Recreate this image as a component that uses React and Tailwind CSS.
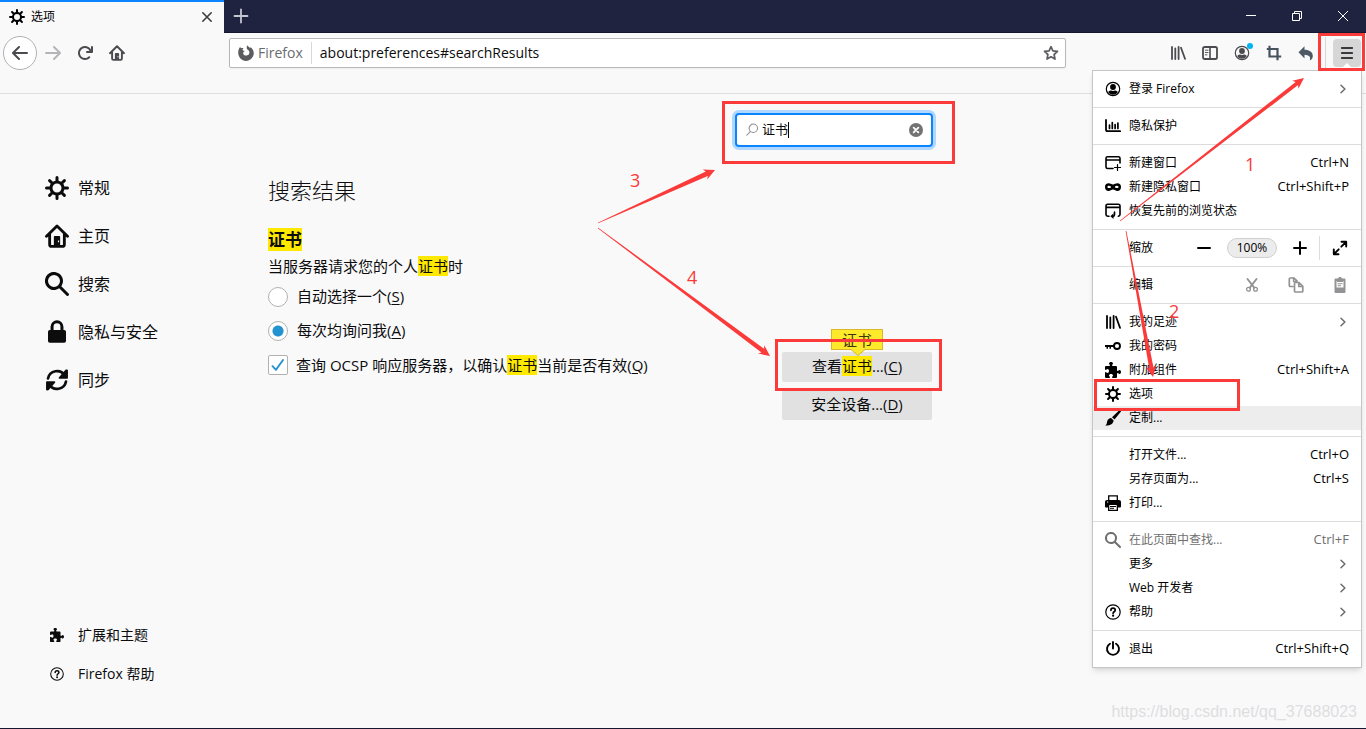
import React from "react";

const GEAR =
  "M15 7h-2.1a4.967 4.967 0 0 0-.732-1.753l1.49-1.49a1 1 0 0 0-1.414-1.414l-1.49 1.49A4.968 4.968 0 0 0 9 3.1V1a1 1 0 0 0-2 0v2.1a4.968 4.968 0 0 0-1.753.732l-1.49-1.49a1 1 0 0 0-1.414 1.415l1.49 1.49A4.967 4.967 0 0 0 3.1 7H1a1 1 0 0 0 0 2h2.1a4.968 4.968 0 0 0 .737 1.763c-.014.013-.032.017-.045.03l-1.45 1.45a1 1 0 1 0 1.414 1.414l1.45-1.45c.013-.013.018-.031.03-.045A4.968 4.968 0 0 0 7 12.9V15a1 1 0 0 0 2 0v-2.1a4.968 4.968 0 0 0 1.753-.732l1.49 1.49a1 1 0 0 0 1.414-1.414l-1.49-1.49A4.967 4.967 0 0 0 12.9 9H15a1 1 0 0 0 0-2zM5 8a3 3 0 1 1 3 3 3 3 0 0 1-3-3z";
const ARROW =
  "M15 7H3.414l4.293-4.293a1 1 0 0 0-1.414-1.414l-6 6a1 1 0 0 0 0 1.414l6 6a1 1 0 0 0 1.414-1.414L3.414 9H15a1 1 0 0 0 0-2z";
const RELOAD =
  "M15 1a1 1 0 0 0-1 1v2.418A6.995 6.995 0 1 0 8 15a6.954 6.954 0 0 0 4.95-2.05 1 1 0 0 0-1.414-1.414A5.019 5.019 0 1 1 12.549 6H10a1 1 0 0 0 0 2h5a1 1 0 0 0 1-1V2a1 1 0 0 0-1-1z";
const SEARCH =
  "M15.707 14.293l-4.822-4.822a6.019 6.019 0 1 0-1.414 1.414l4.822 4.822a1 1 0 0 0 1.414-1.414zM6 10a4 4 0 1 1 4-4 4 4 0 0 1-4 4z";
const PUZZLE =
  "M14.5 8c-.971 0-1 1-1.75 1a.765.765 0 0 1-.75-.75V5a1 1 0 0 0-1-1H7.75A.765.765 0 0 1 7 3.25c0-.75 1-.779 1-1.75C8 .635 7.1 0 6 0S4 .635 4 1.5c0 .971 1 1 1 1.75a.765.765 0 0 1-.75.75H1a1 1 0 0 0-1 1v2.25A.765.765 0 0 0 .75 8c.75 0 .779-1 1.75-1C3.365 7 4 7.9 4 9s-.635 2-1.5 2c-.971 0-1-1-1.75-1a.765.765 0 0 0-.75.75V15a1 1 0 0 0 1 1h3.25a.765.765 0 0 0 .75-.75c0-.75-1-.779-1-1.75 0-.865.9-1.5 2-1.5s2 .635 2 1.5c0 .971-1 1-1 1.75a.765.765 0 0 0 .75.75H11a1 1 0 0 0 1-1v-3.25a.765.765 0 0 1 .75-.75c.75 0 .779 1 1.75 1 .865 0 1.5-.9 1.5-2s-.635-2-1.5-2z";

function Svg({ className = "size-4", children }) {
  return (
    <svg viewBox="0 0 16 16" fill="currentColor" aria-hidden="true" className={`shrink-0 ${className}`}>
      {children}
    </svg>
  );
}

const line = { fill: "none", stroke: "currentColor", strokeLinecap: "round", strokeLinejoin: "round" };

const Gear = (p) => <Svg {...p}><path d={GEAR} /></Svg>;
const Back = (p) => <Svg {...p}><path d={ARROW} /></Svg>;
const Forward = (p) => <Svg {...p}><path d={ARROW} transform="matrix(-1 0 0 1 16 0)" /></Svg>;
const Reload = (p) => <Svg {...p}><path d={RELOAD} /></Svg>;
const Search = (p) => <Svg {...p}><path d={SEARCH} /></Svg>;
const Puzzle = (p) => <Svg {...p}><path d={PUZZLE} /></Svg>;
const Home = (p) => (
  <Svg {...p}>
    <path d="M1 8.2 8 1.3l7 6.9M3.1 7v6.6c0 .8.5 1.3 1.3 1.3h7.2c.8 0 1.3-.5 1.3-1.3V7" {...line} strokeWidth="1.9" />
    <path fillRule="evenodd" d="M6.6 8h2.8c.4 0 .7.3.7.7V15H5.9V8.700c0-.4.3-.7.7-.7zM8.600 11v1.200h.8V11z" />
  </Svg>
);
const Lock = (p) => (
  <Svg {...p}>
    <path d="M4.700 8V4.500a3.300 3.300 0 0 1 6.600 0V8" {...line} strokeWidth="2" />
    <rect x="2" y="6.600" width="12" height="8.600" rx="1.200" />
  </Svg>
);
const Sync = (p) => (
  <Svg {...p}>
    <path d="M2 7A6.100 6.100 0 0 1 13.200 5M14 9A6.100 6.100 0 0 1 2.800 11" {...line} strokeWidth="1.800" />
    <path d="M14.600 1c.4 0 .7.300.7.700v4.800c0 .4-.3.700-.7.700H9.800c-.6 0-.9-.7-.5-1.100l4.200-4.800c.2-.2.500-.3 1.100-.3zM1.400 15a.7.700 0 0 1-.7-.7V9.500c0-.4.300-.7.700-.7h4.800c.6 0 .9.700.5 1.100l-4.200 4.800c-.2.200-.5.300-1.100.3z" />
  </Svg>
);
const Help = (p) => (
  <Svg {...p}>
    <circle cx="8" cy="8" r="7.200" {...line} strokeWidth="1.200" />
    <path d="M5.900 6.300c0-1.300.9-2.100 2.100-2.100s2.200.8 2.200 2c0 1.500-2.100 1.600-2.100 3.100" {...line} strokeWidth="1.700" />
    <circle cx="8.100" cy="11.700" r="1.100" />
  </Svg>
);
const Person = (p) => (
  <Svg {...p}>
    <circle cx="8" cy="8" r="6.700" {...line} strokeWidth="1.200" />
    <circle cx="8" cy="6" r="2.900" />
    <path d="M3.200 11c.8-1.400 2.300-1.500 3-1.500.6.500 3 .5 3.600 0 .7 0 2.200.1 3 1.500-1 1.800-2.800 2.700-4.800 2.700S4.200 12.800 3.200 11z" />
  </Svg>
);
const Chart = (p) => (
  <Svg {...p}>
    <path d="M1 2v9.500c0 1 .6 1.700 1.700 1.700H15.200" {...line} strokeWidth="1.800" />
    <path d="M4.500 7v3.500M7.300 4.500v6M10.100 6.500v4M12.900 5v5.500" {...line} strokeWidth="1.700" />
  </Svg>
);
const NewWindow = (p) => (
  <Svg {...p}>
    <path d="M8 13.500H2.700c-1 0-1.700-.6-1.700-1.600V3.300c0-1 .7-1.600 1.700-1.600h10.600c1 0 1.700.6 1.700 1.600V8M1 5h14" {...line} strokeWidth="1.600" />
    <path d="M12.500 9.500v6M9.500 12.500h6" {...line} strokeWidth="1.200" />
  </Svg>
);
const RestoreWindow = (p) => (
  <Svg {...p}>
    <path d="M4 13.200H2.700c-1 0-1.700-.6-1.700-1.600V2.800c0-1 .7-1.600 1.700-1.600h10.600c1 0 1.700.6 1.700 1.600v8.800c0 1-.7 1.600-1.700 1.600M1 4.400h14M9.500 9v2.800c0 .8-.5 1.400-1.300 1.400H7.500" {...line} strokeWidth="1.600" />
    <path d="M8.500 10.300v5.700L5.400 13.200z" />
  </Svg>
);
const Mask = (p) => (
  <Svg {...p}>
    <path fillRule="evenodd" d="M3.600 4.300C1.400 4.300 0 5.500 0 8s1.500 4.100 3.500 4.100c1.900 0 2.900-1.500 4.500-1.500s2.600 1.500 4.500 1.500c2 0 3.500-1.600 3.500-4.100s-1.400-3.700-3.600-3.700c-1.800 0-2.900 1.200-4.400 1.200S5.400 4.300 3.600 4.300zM4.200 6.700c1 0 1.900.8 1.900 1.300S5.200 9 4.200 9s-1.900-.4-1.900-1 .9-1.300 1.900-1.300zm7.600 0c1 0 1.900.8 1.900 1.300s-.9 1-1.900 1-1.900-.4-1.900-1 .9-1.300 1.900-1.300z" />
  </Svg>
);
const Library = (p) => (
  <Svg {...p}>
    <path d="M2 2v12M5.300 3.500V14M8.600 2v12M11 2.800l4 11" {...line} strokeWidth="1.800" />
  </Svg>
);
const Key = (p) => (
  <Svg {...p}>
    <circle cx="12" cy="8" r="3" {...line} strokeWidth="1.900" />
    <path d="M0 7h9v2H6v1.800H4.500V9H3v1.800H1.500V9H0z" />
  </Svg>
);
const Brush = (p) => (
  <Svg {...p}>
    <path d="M15.700.3c.4.400.4 1 .1 1.400l-6.300 7.800-2.500-2.300L14.300.3c.4-.4 1-.4 1.400 0zM6.100 8.100l2.500 2.300c-.2 3-3.300 5.300-8.300 5.100 1.900-1.100 1.400-2.600 2-4.400.6-1.700 2-2.700 3.800-3z" />
  </Svg>
);
const Printer = (p) => (
  <Svg {...p}>
    <path d="M3.700 5V.9h8.600V5" fill="none" stroke="currentColor" strokeWidth="1.300" />
    <path fillRule="evenodd" d="M2 5h12c1.200 0 2 .8 2 2v4.500c0 .5-.4.900-.9.900H13V16H3v-3.600H.900a.9.900 0 0 1-.9-.9V7c0-1.200.8-2 2-2zm2.300 5v4.700h7.400V10zM2 6.500v1h1.200v-1z" />
    <path d="M5 11.500h6M5 13.300h4" fill="none" stroke="currentColor" strokeWidth="1" />
  </Svg>
);
const Power = (p) => (
  <Svg {...p}>
    <path d="M5 2.700a6 6 0 1 0 6 0M8 1v6.500" {...line} strokeWidth="1.900" />
  </Svg>
);
const Chevron = (p) => (
  <Svg {...p}>
    <path d="M6 4.200 9.900 8 6 11.800" {...line} strokeWidth="1.500" />
  </Svg>
);
const Minus = (p) => <Svg {...p}><path d="M2 8h12" {...line} strokeWidth="2" /></Svg>;
const Plus = (p) => <Svg {...p}><path d="M2 8h12M8 2v12" {...line} strokeWidth="2" /></Svg>;
const Expand = (p) => (
  <Svg {...p}>
    <path d="M9.300 6.700 14 2M6.700 9.300 2 14M9.500 1.800h4.700v4.700M6.500 14.200H1.800V9.500" {...line} strokeWidth="1.900" />
  </Svg>
);
const Cut = (p) => (
  <Svg {...p}>
    <path d="M3.500 2l6.700 8.700M12.500 2 5.800 10.700" {...line} strokeWidth="1.900" />
    <circle cx="4.500" cy="12.300" r="1.900" {...line} strokeWidth="1.300" />
    <circle cx="11.500" cy="12.300" r="1.900" {...line} strokeWidth="1.300" />
  </Svg>
);
const Copy = (p) => (
  <Svg {...p}>
    <path d="M5 9.500H2.300c-.6 0-1-.4-1-1V2c0-.6.400-1 1-1h3.400L9 4" {...line} strokeWidth="1.700" />
    <path d="M5.500 1v3.500H9" {...line} strokeWidth="1.400" />
    <path d="M6.500 6.500c0-.6.400-1 1-1H11l3.800 3.800V14c0 .6-.4 1-1 1H7.500c-.6 0-1-.4-1-1zM10.800 5.800v3.700h3.700" {...line} strokeWidth="1.700" />
  </Svg>
);
const Paste = (p) => (
  <Svg {...p}>
    <path fillRule="evenodd" d="M6 1.500C6.200.6 7 0 8 0s1.800.6 2 1.500h2.200c.8 0 1.300.5 1.300 1.300v11.900c0 .8-.5 1.300-1.300 1.300H3.800c-.8 0-1.300-.5-1.300-1.300V2.800c0-.8.5-1.300 1.300-1.300zM4.500 4v6.500h7V4z" />
    <path d="M5 2.500h6V5H5zM5.500 6.200h5v1h-5zM5.500 8.300h3.500v1H5.500z" />
  </Svg>
);
const Sidebar = (p) => (
  <Svg {...p}>
    <rect x="1" y="2" width="14" height="12" rx="1.700" {...line} strokeWidth="1.800" />
    <path d="M8 2v12" {...line} strokeWidth="1.600" />
    <path d="M3.300 5.200H6M3.300 7.500H6M3.300 9.800H5" {...line} strokeWidth=".9" />
  </Svg>
);
const Crop = (p) => (
  <Svg {...p}>
    <path d="M3.500.8v10.700h11.700M.8 4h10.700v11.200" fill="none" stroke="currentColor" strokeWidth="2.200" />
  </Svg>
);
const Undo = (p) => (
  <Svg {...p}>
    <path d="M6.500 1.200v3.600c5 0 8.300 2.300 8.300 6.200 0 2-1.100 3.700-3 4.500 1.300-3.600-.9-5.600-5.300-5.700v3.600L.5 7.200z" />
  </Svg>
);
const Star = (p) => (
  <Svg {...p}>
    <path d="M8 1.700l1.900 4.200 4.600.5-3.400 3.100.9 4.600L8 11.800l-4 2.300.9-4.600L1.500 6.400l4.600-.5z" {...line} strokeWidth="1.700" />
  </Svg>
);
const Flame = (p) => (
  <Svg {...p}>
    <path d="M.2 7.500C.2 5 1.200 3 2.300 1.800c0 .7.300 1.200.7 1.500.8-.3 1.700-.3 2.500 0-.8.700-1 1.400-.9 1.900.7.500 1.700.3 2 .8-.1.800-1.300.9-1.500 1.900.2 1.700 1.500 2.700 3.100 2.700 1.900 0 3.200-1.500 3.200-3.100 0-1.800-1.200-2.600-2-3C8.500 3.600 8.300 1.400 9.700.2c.2 1.500 1.600 1.900 2.600 2.800.2-.3.200-.7.100-1.100 2 1.500 3.400 3.700 3.400 6.200 0 4.300-3.500 7.800-7.800 7.800S.2 12 .2 7.500z" />
  </Svg>
);

function Mark({ children }) {
  return <mark className="bg-[#ffe900] text-inherit">{children}</mark>;
}

function ToolButton({ label, className = "text-[#4a4a4f]", children }) {
  return (
    <button type="button" aria-label={label} className={`flex h-8 w-8 items-center justify-center ${className}`}>
      {children}
    </button>
  );
}

function TitleBar() {
  return (
    <header className="flex h-[33px] border-b border-[#15162f] bg-[#202340]">
      <div className="-mb-px flex w-56 items-center border-t-2 border-[#0a84ff] bg-[#f9f9fa] px-[9px] pb-0.5 text-black">
        <Gear />
        <span className="ml-1.5 flex-1 text-xs">选项</span>
        <button type="button" aria-label="关闭标签页" className="flex size-4 items-center justify-center text-[#3c3c40]">
          <Svg><path d="M3.800 3.800l8.400 8.400M12.200 3.800l-8.400 8.400" {...line} strokeWidth="1.600" /></Svg>
        </button>
      </div>
      <button type="button" aria-label="新建标签页" className="flex w-[34px] items-center justify-center text-[#c5c6d2]">
        <Svg><path d="M1.500 8h13M8 1.500v13" {...line} strokeWidth="1.800" /></Svg>
      </button>
      <div className="ml-auto flex text-white">
        <button type="button" aria-label="最小化" className="flex w-[46px] items-center justify-center">
          <Svg><path d="M3 7.500h10" fill="none" stroke="currentColor" /></Svg>
        </button>
        <button type="button" aria-label="还原" className="flex w-[46px] items-center justify-center">
          <Svg><path d="M3.500 5.500h7v7h-7zM5.500 5.500v-2h7v7h-2" fill="none" stroke="currentColor" /></Svg>
        </button>
        <button type="button" aria-label="关闭" className="flex w-[46px] items-center justify-center">
          <Svg><path d="M3 3l10 10M13 3 3 13" fill="none" stroke="currentColor" /></Svg>
        </button>
      </div>
    </header>
  );
}

function ToolBar() {
  return (
    <div className="flex h-[61px] items-start border-b border-[#dedee0] pl-[3px] pr-[5px] pt-[3px]">
      <div className="flex h-[34px] items-center">
        <button type="button" aria-label="后退" className="flex size-[34px] items-center justify-center rounded-full border border-[#b1b1b3] bg-white text-[#4a4a4f]">
          <Back />
        </button>
        <ToolButton label="前进" className="text-[#b5b5b8]"><Forward /></ToolButton>
        <ToolButton label="刷新"><Reload /></ToolButton>
        <ToolButton label="主页"><Home /></ToolButton>
      </div>
      <div className="mx-24 mt-0.5 flex h-[30px] flex-1 items-center rounded-xs border border-[#b8b8ba] bg-white px-2 shadow-xs">
        <Flame className="size-4 text-[#5c5c60]" />
        <span className="ml-1 mr-2 text-sm text-[#6b6b70]">Firefox</span>
        <span className="h-[22px] w-px bg-[#d7d7db]" />
        <input aria-label="地址" defaultValue="about:preferences#searchResults" className="ml-2 min-w-0 flex-1 bg-transparent text-sm text-[#0c0c0d] outline-none" />
        <button type="button" aria-label="收藏" className="-mr-0.5 text-[#5c5c60]"><Star className="size-4" /></button>
      </div>
      <div className="flex h-[34px] items-center">
        <ToolButton label="我的足迹"><Library /></ToolButton>
        <ToolButton label="侧栏"><Sidebar /></ToolButton>
        <ToolButton label="账户">
          <span className="relative flex">
            <Person />
            <span className="absolute -right-[3px] -top-0.5 size-1.5 rounded-full bg-[#00b3f4]" />
          </span>
        </ToolButton>
        <ToolButton label="截图" className="text-[#46535f]"><Crop /></ToolButton>
        <ToolButton label="撤销" className="text-[#4c5864]"><Undo /></ToolButton>
        <span className="ml-[3px] mr-[7px] h-8 w-px bg-[#d7d7db]" />
        <button type="button" aria-label="打开菜单" className="flex size-7 items-center justify-center rounded-sm bg-[#d6d6d7] text-[#3a3a3e]">
          <Svg><path d="M2.800 3h10.400M2.800 8h10.400M2.800 13h10.400" {...line} strokeWidth="1.800" /></Svg>
        </button>
      </div>
    </div>
  );
}

const categories = [
  [Gear, "常规"],
  [Home, "主页"],
  [Search, "搜索"],
  [Lock, "隐私与安全"],
  [Sync, "同步"],
];

function Categories() {
  return (
    <nav className="flex w-[268px] shrink-0 flex-col justify-between pb-[35px] pl-[45px] pt-[70px] text-[#0c0c0d]">
      <ul>
        {categories.map(([Icon, label]) => (
          <li key={label}>
            <a href="#category" className="flex h-12 items-center gap-[9px] text-base">
              <Icon className="size-6" />
              {label}
            </a>
          </li>
        ))}
      </ul>
      <ul>
        {[[Puzzle, "扩展和主题"], [Help, "Firefox 帮助"]].map(([Icon, label]) => (
          <li key={label}>
            <a href="#support" className="flex h-[39px] items-center gap-[9px] text-sm">
              <span className="flex w-6 justify-center"><Icon className="size-3.5" /></span>
              {label}
            </a>
          </li>
        ))}
      </ul>
    </nav>
  );
}

function Preferences() {
  return (
    <main className="max-w-[665px] flex-1 pt-[19px] text-[15px] leading-5 text-[#0c0c0d]">
      <div className="flex justify-end">
        <div className="relative flex h-[34px] w-[198px] items-center rounded-sm border-2 border-[#0a84ff] bg-white px-2 ring-3 ring-[#b0d7ff]">
          <Svg className="size-3.5 text-[#8c8c90]">
            <circle cx="9.500" cy="6" r="4.800" {...line} strokeWidth="1.200" />
            <path d="M6 9.800 2 14" {...line} strokeWidth="1.200" />
          </Svg>
          <input aria-label="在选项中查找" defaultValue="证书" className="ml-[3px] min-w-0 flex-1 bg-transparent pb-0.5 text-[13px] outline-none" />
          <span className="absolute left-[51px] top-[7px] h-4 w-px bg-black" />
          <button type="button" aria-label="清除">
            <Svg className="size-3.5 text-[#737373]">
              <circle cx="8" cy="8" r="8" />
              <path d="M5.300 5.300l5.400 5.400M10.700 5.300l-5.400 5.400" stroke="#fff" strokeWidth="2" strokeLinecap="round" />
            </Svg>
          </button>
        </div>
      </div>
      <h1 className="mt-7 text-[22px] font-light leading-[30px]">搜索结果</h1>
      <h2 className="mt-6 text-[17px] font-bold leading-[21px]"><Mark>证书</Mark></h2>
      <p className="mt-1.5">当服务器请求您的个人<Mark>证书</Mark>时</p>
      <div className="mt-[11px] flex flex-col gap-3.5">
        <label className="flex h-5 items-center gap-[9px]">
          <input type="radio" name="cert" className="size-5 appearance-none rounded-full border border-[#b1b1b1] bg-white" />
          <span className="pb-0.5">自动选择一个(<u className="underline-offset-2">S</u>)</span>
        </label>
        <label className="flex h-5 items-center gap-[9px]">
          <input type="radio" name="cert" defaultChecked className="size-5 appearance-none rounded-full border border-[#b1b1b1] bg-white bg-[radial-gradient(circle,#2292d0_5px,transparent_6px)]" />
          <span className="pb-0.5">每次均询问我(<u className="underline-offset-2">A</u>)</span>
        </label>
      </div>
      <div className="mt-[11px] flex items-start justify-between pr-px">
        <label className="mt-[3px] flex h-5 items-center gap-2">
          <span className="relative flex size-5">
            <input type="checkbox" defaultChecked className="size-5 appearance-none rounded-xs border border-[#b1b1b1] bg-white" />
            <Svg className="pointer-events-none absolute left-0.5 top-0.5 size-4 text-[#2292d0]">
              <path d="M2.500 9.200 6 12.800 13 3" {...line} strokeWidth="1.900" />
            </Svg>
          </span>
          <span>查询 OCSP 响应服务器，以确认<Mark>证书</Mark>当前是否有效(<u className="underline-offset-2">Q</u>)</span>
        </label>
        <div className="flex flex-col gap-2">
          <div className="relative">
            <button type="button" className="h-[30px] w-[150px] rounded-xs bg-[#e1e1e2] pb-0.5">
              查看<Mark>证书</Mark>...(<u className="underline-offset-2">C</u>)
            </button>
            <div className="absolute -top-[23px] left-[49px] flex h-[21px] w-[52px] items-center justify-center border border-[#d9b92b] bg-[#ffe92b] text-[#3a3612]">
              证书
              <svg viewBox="0 0 14 7" aria-hidden="true" className="absolute left-[19px] top-[19px] h-[7px] w-3.5">
                <path d="M0 0h14L7 7z" fill="#ffe92b" />
                <path d="M0 .5 7 6.500l7-6" fill="none" stroke="#d9b92b" />
              </svg>
            </div>
          </div>
          <button type="button" className="h-[30px] w-[150px] rounded-xs bg-[#e1e1e2] pb-0.5">
            安全设备...(<u className="underline-offset-2">D</u>)
          </button>
        </div>
      </div>
    </main>
  );
}

function Item({ icon: Icon, label, keys, more, className = "" }) {
  return (
    <button type="button" className={`flex h-6 w-full items-center gap-2 px-3 text-left ${className}`}>
      <span className="flex w-4">{Icon && <Icon />}</span>
      <span className="flex-1">{label}</span>
      {keys && <span className="text-[13px]">{keys}</span>}
      {more && <Chevron className="-mr-0.5 size-4 text-[#6b6b6f]" />}
    </button>
  );
}

function Section({ children }) {
  return <div className="border-t border-[#dcdcdd] py-1.5 first:border-t-0">{children}</div>;
}

function AppMenu() {
  return (
    <div className="absolute right-1 top-[70px] w-[270px] border border-[#c6c6c8] bg-white text-xs text-black shadow-md">
      <Section><Item icon={Person} label="登录 Firefox" more /></Section>
      <Section><Item icon={Chart} label="隐私保护" /></Section>
      <Section>
        <Item icon={NewWindow} label="新建窗口" keys="Ctrl+N" />
        <Item icon={Mask} label="新建隐私窗口" keys="Ctrl+Shift+P" />
        <Item icon={RestoreWindow} label="恢复先前的浏览状态" />
      </Section>
      <Section>
        <div className="flex h-6 items-center pl-9">
          <span className="flex-1">缩放</span>
          <button type="button" aria-label="缩小" className="flex w-[46px] justify-center"><Minus /></button>
          <button type="button" className="h-5 w-[50px] rounded-full border border-[#cfcfd1] bg-[#ececed]">100%</button>
          <button type="button" aria-label="放大" className="flex w-[42px] justify-center pl-1"><Plus /></button>
          <button type="button" aria-label="全屏" className="flex h-6 w-[42px] items-center justify-center border-l border-[#dcdcdd] pr-0.5"><Expand /></button>
        </div>
      </Section>
      <Section>
        <div className="flex h-6 items-center pl-9">
          <span className="flex-1">编辑</span>
          <div className="-mr-px flex text-[#939395]">
            <button type="button" aria-label="剪切" className="flex w-11 justify-center"><Cut /></button>
            <button type="button" aria-label="复制" className="flex w-11 justify-center"><Copy /></button>
            <button type="button" aria-label="粘贴" className="flex w-11 justify-center"><Paste /></button>
          </div>
        </div>
      </Section>
      <Section>
        <Item icon={Library} label="我的足迹" more />
        <Item icon={Key} label="我的密码" />
        <Item icon={Puzzle} label="附加组件" keys="Ctrl+Shift+A" />
        <Item icon={Gear} label="选项" />
        <Item icon={Brush} label="定制..." className="bg-[#ededed]" />
      </Section>
      <Section>
        <Item label="打开文件..." keys="Ctrl+O" />
        <Item label="另存页面为..." keys="Ctrl+S" />
        <Item icon={Printer} label="打印..." />
      </Section>
      <Section>
        <Item icon={Search} label="在此页面中查找..." keys="Ctrl+F" className="text-[#6f6f70]" />
        <Item label="更多" more />
        <Item label="Web 开发者" more />
        <Item icon={Help} label="帮助" more />
      </Section>
      <Section><Item icon={Power} label="退出" keys="Ctrl+Shift+Q" /></Section>
      <svg viewBox="0 0 16 9" aria-hidden="true" className="absolute -top-[9px] right-1.5 h-[9px] w-4">
        <path d="M0 9 8 1l8 8z" fill="#fff" />
      </svg>
    </div>
  );
}

// Tapered arrow: a point at the tail that widens up to a triangular head.
function taper([x1, y1], [x2, y2], half) {
  const len = Math.hypot(x2 - x1, y2 - y1);
  const ux = (x2 - x1) / len;
  const uy = (y2 - y1) / len;
  const at = (back, side) => `${x2 - ux * back - uy * side},${y2 - uy * back + ux * side}`;
  return [at(len, 0.4), at(9, half), at(11, half + 3), at(0, 0), at(11, -half - 3), at(9, -half), at(len, -0.4)].join(" ");
}

function Annotations() {
  return (
    <div className="pointer-events-none absolute inset-0 overflow-hidden text-lg font-medium leading-6 text-[#fb3a3a]">
      <svg width="1366" height="729" aria-hidden="true" className="absolute left-0 top-0" fill="#fb3a3a">
        <polygon points={taper([1120, 221], [1304, 78], 2)} />
        <polygon points={taper([1126, 231], [1153, 377], 2.2)} />
        <polygon points={taper([598, 223], [715, 170], 2.4)} />
        <polygon points={taper([598, 228], [770, 356], 2.2)} />
      </svg>
      <div className="absolute left-[1318px] top-[33px] h-[38px] w-[47px] border-3 border-[#fb3a3a]" />
      <div className="absolute left-[722px] top-[101px] h-[63px] w-[233px] border-3 border-[#fb3a3a]" />
      <div className="absolute left-[775px] top-[339px] h-[52px] w-[167px] border-3 border-[#fb3a3a]" />
      <div className="absolute left-[1094px] top-[379px] h-8 w-[146px] border-3 border-[#fb3a3a]" />
      <span className="absolute left-[1245px] top-[152px]">1</span>
      <span className="absolute left-[1169px] top-[299px]">2</span>
      <span className="absolute left-[630px] top-[168px]">3</span>
      <span className="absolute left-[687px] top-[265px]">4</span>
    </div>
  );
}

export default function App() {
  return (
    <div lang="zh-CN" className="relative flex min-h-screen flex-col border-b border-[#15162f] bg-[#f9f9fa] font-['Open_Sans','Noto_Sans_CJK_SC',sans-serif]">
      <TitleBar />
      <ToolBar />
      <div className="flex flex-1">
        <Categories />
        <Preferences />
      </div>
      <AppMenu />
      <Annotations />
      <span className="absolute bottom-1 right-[9px] font-['Liberation_Sans',sans-serif] text-base text-[#dedee0]">
        https://blog.csdn.net/qq_37688023
      </span>
    </div>
  );
}
